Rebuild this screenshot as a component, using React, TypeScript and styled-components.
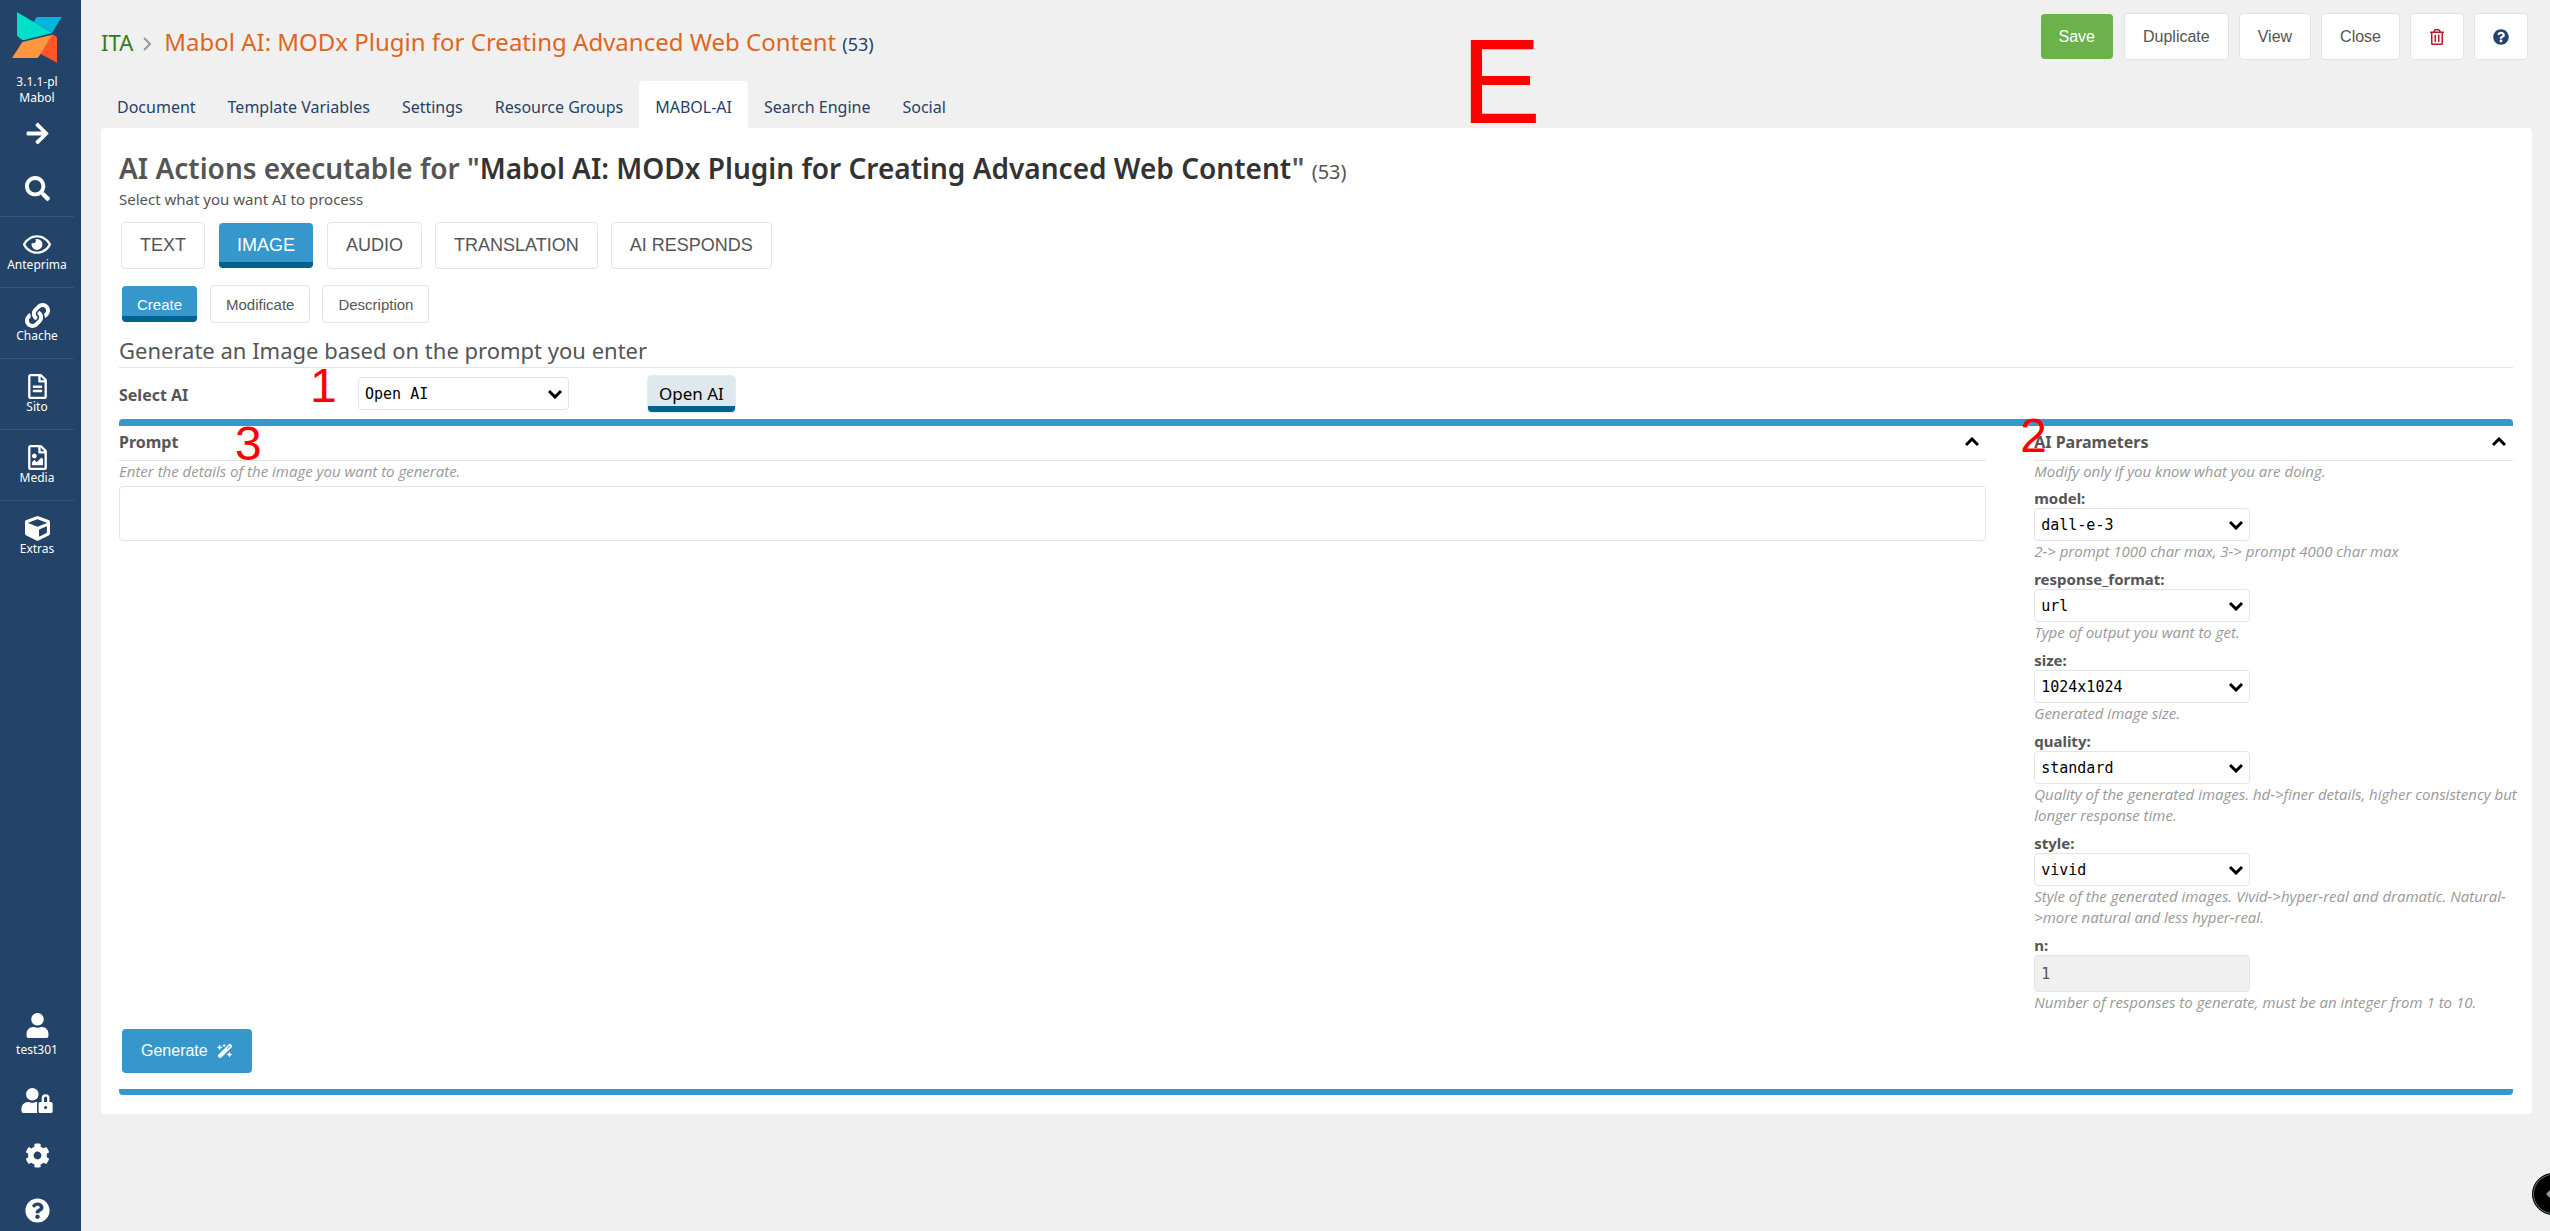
import React from "react";
import styled, { createGlobalStyle, css } from "styled-components";
import {
  FaArrowRight,
  FaSearch,
  FaRegEye,
  FaLink,
  FaRegFileAlt,
  FaRegFileImage,
  FaCube,
  FaUser,
  FaUserLock,
  FaCog,
  FaQuestionCircle,
  FaRegTrashAlt,
} from "react-icons/fa";
import { FaWandMagicSparkles } from "react-icons/fa6";

const navy = "#234368";
const blue = "#3697cd";
const deepBlue = "#00628f";
const line = "#e4e4e4";
const uiFont = '"Segoe UI", "Noto Sans", sans-serif';
const helpFont = '"Segoe UI", "Open Sans", sans-serif';
const buttonFont = '"Liberation Sans", Arial, sans-serif';
const monoFont = '"DejaVu Sans Mono", monospace';

const GlobalStyle = createGlobalStyle`
  *, *::before, *::after { box-sizing: border-box; }
  body {
    margin: 0;
    background: #f0f0f0;
    color: #555;
    font-family: ${uiFont};
    overflow: hidden;
  }
  h1, h2, h3, h4, p { margin: 0; }
`;

const Shell = styled.div`
  display: flex;
  height: 100vh;
  overflow: hidden;
`;

/* ---------- sidebar ---------- */

const Sidebar = styled.nav`
  display: flex;
  flex-direction: column;
  flex: 0 0 81px;
  padding-right: 7px;
  background: ${navy};
  overflow: hidden;
`;

const Brand = styled.a`
  display: flex;
  flex-direction: column;
  align-items: center;
  height: 106px;
  padding-top: 12px;
  color: #fff;
  font-size: 12px;
  line-height: 16px;
  text-align: center;
  text-decoration: none;

  svg {
    margin-bottom: 11px;
  }
`;

const NavItem = styled.a<{ $ruled?: boolean; $labelled?: boolean; $iconWidth?: number }>`
  display: flex;
  flex-direction: column;
  align-items: center;
  flex-shrink: 0;
  height: ${(p) => (p.$labelled ? 71 : 55)}px;
  padding-top: 15px;
  border-top: ${(p) => (p.$ruled ? "1px solid #38567a" : "none")};
  color: #fff;
  font-size: 12px;
  line-height: 16px;
  text-decoration: none;

  svg {
    flex-shrink: 0;
    width: ${(p) => p.$iconWidth ?? 25}px;
    height: 25px;
  }
`;

const FootNav = styled.div`
  display: flex;
  flex-direction: column;
  margin-top: auto;
  margin-bottom: -7px;

  ${NavItem}:first-child {
    gap: 4px;
    height: 75px;
  }
`;

/* ---------- header ---------- */

const Main = styled.main`
  flex: 1;
  min-width: 0;
  padding: 13px 18px 0 20px;
`;

const Header = styled.header`
  display: flex;
  justify-content: space-between;
  align-items: flex-start;
  height: 68px;
  padding-right: 4px;
`;

const Crumbs = styled.div`
  display: flex;
  align-items: baseline;
  padding-top: 12px;
  font-size: 24px;
  line-height: 34px;
  color: ${navy};
`;

const CrumbLink = styled.a`
  color: #2b8013;
  font-size: 22px;
  text-decoration: none;
`;

const CrumbSep = styled.svg`
  margin: 0 13px 0 10px;
`;

const PageTitle = styled.h1`
  color: #e0661c;
  font-size: 24px;
  font-weight: 400;
  line-height: 34px;
`;

const PageId = styled.span`
  margin-left: 6px;
  font-size: 18px;
`;

const Toolbar = styled.div`
  display: flex;
  gap: 10px;
`;

const buttonBase = css`
  display: inline-flex;
  align-items: center;
  justify-content: center;
  border: 1px solid ${line};
  border-radius: 4px;
  background: #fff;
  color: #555;
  font-family: ${buttonFont};
  cursor: pointer;
`;

const ToolButton = styled.button<{ $tone?: "primary" | "danger" | "info" }>`
  ${buttonBase}
  height: 47px;
  padding: 0 18px;
  font-size: 16px;
  ${(p) => p.$tone === "primary" && "background: #6cb24a; border-color: #f0f0f0; color: #fff; background-clip: padding-box;"}
  ${(p) => p.$tone === "danger" && "color: #be1622;"}
  ${(p) => p.$tone === "info" && `color: ${navy};`}
`;

const TabBar = styled.div`
  display: flex;
`;

const Tab = styled.button<{ $active?: boolean }>`
  height: 47px;
  padding: 4px 16px 0;
  border: 0;
  border-radius: 4px 4px 0 0;
  background: ${(p) => (p.$active ? "#fff" : "transparent")};
  color: ${navy};
  font-family: ${uiFont};
  font-size: 16px;
  cursor: pointer;
`;

/* ---------- panel ---------- */

const Panel = styled.section`
  padding: 20px 19px 19px 18px;
  border-radius: 4px;
  background: #fff;
`;

const PanelTitle = styled.h2`
  color: #555;
  font-size: 28px;
  font-weight: 600;
  line-height: 40px;

  strong {
    color: #333;
    font-weight: 600;
  }
  small {
    font-size: 20px;
    font-weight: 400;
    line-height: 1;
  }
`;

const Lead = styled.p`
  font-size: 15px;
  line-height: 22px;
`;

const ButtonRow = styled.div<{ $gap: number }>`
  display: flex;
  gap: ${(p) => p.$gap}px;
  margin: 12px 2px;

  & + & {
    margin-top: 16px;
  }
`;

const ChoiceButton = styled.button<{ $small?: boolean; $active?: boolean }>`
  ${buttonBase}
  height: ${(p) => (p.$small ? 38 : 47)}px;
  padding: 0 ${(p) => (p.$small ? 15 : 18)}px;
  font-size: ${(p) => (p.$small ? 15 : 18)}px;
  ${(p) =>
    p.$active &&
    css`
      border-color: #fff;
      background: linear-gradient(to top, ${deepBlue} 6px, ${blue} 6px);
      background-clip: padding-box;
      color: #fff;
    `}
`;

const TaskTitle = styled.h3`
  padding-bottom: 2px;
  border-bottom: 1px solid ${line};
  font-size: 22px;
  font-weight: 400;
  line-height: 30px;
`;

const EngineRow = styled.div`
  position: relative;
  display: flex;
  align-items: center;
  height: 51px;
`;

const EngineLabel = styled.label`
  width: 239px;
  padding-top: 2px;
  font-size: 16px;
  font-weight: 700;
`;

const Chip = styled.span`
  display: block;
  margin-left: 78px;
  padding: 0 11px;
  border: 1px solid #e4ecf0;
  border-radius: 4px;
  background: linear-gradient(to top, ${deepBlue} 6px, #dfe8ed 6px);
  background-clip: padding-box;
  color: #000;
  font-size: 17px;
  line-height: 36px;
`;

const SelectWrap = styled.span<{ $width: number }>`
  position: relative;
  display: block;
  width: ${(p) => p.$width}px;

  svg {
    position: absolute;
    top: 12px;
    right: 7px;
    pointer-events: none;
  }
`;

const SelectBox = styled.select`
  display: block;
  width: 100%;
  height: 33px;
  padding: 0 6px;
  border: 1px solid ${line};
  border-radius: 4px;
  background: #fff;
  color: #000;
  font-family: ${monoFont};
  font-size: 15px;
  appearance: none;
`;

const WorkBox = styled.div`
  border-top: 7px solid ${blue};
  border-bottom: 6px solid ${blue};
  border-radius: 4px;
  padding-bottom: 16px;
`;

const Columns = styled.div`
  display: grid;
  grid-template-columns: 78% 20%;
  justify-content: space-between;
`;

const Column = styled.section`
  position: relative;
  display: flex;
  flex-direction: column;
  min-width: 0;
`;

const ColumnHead = styled.div`
  display: flex;
  align-items: center;
  justify-content: space-between;
  height: 35px;
  padding: 0 7px 3px 0;
  border-bottom: 1px solid ${line};
`;

const ColumnTitle = styled.h4`
  font-size: 16px;
  font-weight: 700;
  line-height: 24px;
`;

const FoldButton = styled.button`
  display: flex;
  padding: 0;
  border: 0;
  background: none;
  cursor: pointer;
`;

const Help = styled.p`
  margin-right: -12px;
  color: #999;
  font-family: ${helpFont};
  font-size: 15px;
  font-style: italic;
  line-height: 21px;
`;

const PromptBox = styled.textarea`
  display: block;
  width: 100%;
  height: 55px;
  margin-top: 4px;
  border: 1px solid ${line};
  border-radius: 4px;
  resize: none;
`;

const Field = styled.div`
  margin-top: 6px;
`;

const FieldLabel = styled.label`
  display: block;
  font-size: 15px;
  font-weight: 700;
  line-height: 20px;
`;

const NumberBox = styled.input`
  display: block;
  width: 216px;
  height: 37px;
  padding: 0 6px;
  border: 1px solid ${line};
  border-radius: 4px;
  background: #f0f0f0;
  color: #555;
  font-family: ${monoFont};
  font-size: 15px;
`;

const FieldList = styled.div`
  display: flex;
  flex-direction: column;
  gap: 1px;
`;

const GenerateButton = styled.button`
  ${buttonBase}
  gap: 9px;
  height: 44px;
  margin: 16px 3px 0;
  padding: 0 19px;
  border: 0;
  background: ${blue};
  color: #fff;
  font-size: 16px;
`;

/* ---------- overlays ---------- */

const Marker = styled.span<{ $x: number; $y: number; $size?: number }>`
  position: absolute;
  left: ${(p) => p.$x}px;
  top: ${(p) => p.$y}px;
  color: #f00;
  font-family: ${buttonFont};
  font-size: ${(p) => p.$size ?? 48}px;
  line-height: 1;
  pointer-events: none;
`;

const Floater = styled.button`
  position: fixed;
  right: -24px;
  bottom: 16px;
  display: flex;
  align-items: center;
  width: 42px;
  height: 42px;
  padding: 0 0 0 12px;
  border: 1px solid #000;
  border-radius: 50%;
  background: #000;
  box-shadow: inset 0 0 0 1px #5c7478;
  color: #999;
`;

const Chevron = ({ up }: { up?: boolean }) => (
  <svg width="14" height="10" viewBox="0 0 14 10" fill="none" stroke="#000" strokeWidth="3">
    <path d={up ? "M1 8 L7 2 L13 8" : "M1 2 L7 8 L13 2"} />
  </svg>
);

const Logo = () => (
  <svg width="50" height="51" viewBox="0 0 150 153">
    <path d="M74 15h75l-28 47-56-32z" fill="#00b5de" />
    <path d="M15 0l106 63-84 21q-4 1-7-1l-12-9q-3-2-3-6z" fill="#00decc" />
    <path d="M121 67l11 6q3 2 3 6v73l-53-28z" fill="#ff5529" />
    <path d="M31 90l90-22-41 66q-2 4-6 4H0z" fill="#ff9640" />
  </svg>
);

const topLinks = [
  { icon: FaRegEye, label: "Anteprima", width: 28 },
  { icon: FaLink, label: "Chache", width: 25 },
  { icon: FaRegFileAlt, label: "Sito", width: 25 },
  { icon: FaRegFileImage, label: "Media", width: 25 },
  { icon: FaCube, label: "Extras", width: 25 },
];

const tabs = [
  "Document",
  "Template Variables",
  "Settings",
  "Resource Groups",
  "MABOL-AI",
  "Search Engine",
  "Social",
];

const modes = ["TEXT", "IMAGE", "AUDIO", "TRANSLATION", "AI RESPONDS"];
const actions = ["Create", "Modificate", "Description"];

const parameters = [
  { name: "model", options: ["dall-e-3", "dall-e-2"], help: "2-> prompt 1000 char max, 3-> prompt 4000 char max" },
  { name: "response_format", options: ["url", "b64_json"], help: "Type of output you want to get." },
  { name: "size", options: ["1024x1024", "1792x1024", "1024x1792"], help: "Generated image size." },
  {
    name: "quality",
    options: ["standard", "hd"],
    help: "Quality of the generated images. hd->finer details, higher consistency but longer response time.",
  },
  {
    name: "style",
    options: ["vivid", "natural"],
    help: "Style of the generated images. Vivid->hyper-real and dramatic. Natural->more natural and less hyper-real.",
  },
];

type DropDownProps = { id: string; options: string[]; width: number };

const DropDown = ({ id, options, width }: DropDownProps) => (
  <SelectWrap $width={width}>
    <SelectBox id={id} defaultValue={options[0]}>
      {options.map((o) => (
        <option key={o}>{o}</option>
      ))}
    </SelectBox>
    <Chevron />
  </SelectWrap>
);

export default function App() {
  return (
    <>
      <GlobalStyle />
      <Shell>
        <Sidebar>
          <Brand href="#home">
            <Logo />
            <span>3.1.1-pl</span>
            <span>Mabol</span>
          </Brand>
          <NavItem href="#expand" aria-label="Expand">
            <FaArrowRight />
          </NavItem>
          <NavItem href="#search" aria-label="Search">
            <FaSearch />
          </NavItem>
          {topLinks.map(({ icon: Icon, label, width }) => (
            <NavItem key={label} href={`#${label}`} $ruled $labelled $iconWidth={width}>
              <Icon />
              {label}
            </NavItem>
          ))}
          <FootNav>
            <NavItem href="#user" $labelled>
              <FaUser />
              test301
            </NavItem>
            <NavItem href="#access" aria-label="Access" $iconWidth={32}>
              <FaUserLock />
            </NavItem>
            <NavItem href="#settings" aria-label="System settings">
              <FaCog />
            </NavItem>
            <NavItem href="#help" aria-label="Help">
              <FaQuestionCircle />
            </NavItem>
          </FootNav>
        </Sidebar>

        <Main>
          <Header>
            <Crumbs>
              <CrumbLink href="#ita">ITA</CrumbLink>
              <CrumbSep width="8" height="14" viewBox="0 0 8 14" fill="none" stroke="#999" strokeWidth="2">
                <path d="M1 1l6 6-6 6" />
              </CrumbSep>
              <PageTitle>Mabol AI: MODx Plugin for Creating Advanced Web Content</PageTitle>
              <PageId>(53)</PageId>
            </Crumbs>
            <Toolbar>
              <ToolButton $tone="primary">Save</ToolButton>
              <ToolButton>Duplicate</ToolButton>
              <ToolButton>View</ToolButton>
              <ToolButton>Close</ToolButton>
              <ToolButton $tone="danger" aria-label="Delete">
                <FaRegTrashAlt size={16} />
              </ToolButton>
              <ToolButton $tone="info" aria-label="Help">
                <FaQuestionCircle size={16} />
              </ToolButton>
            </Toolbar>
          </Header>

          <TabBar role="tablist">
            {tabs.map((t) => (
              <Tab key={t} role="tab" aria-selected={t === "MABOL-AI"} $active={t === "MABOL-AI"}>
                {t}
              </Tab>
            ))}
          </TabBar>

          <Panel>
            <PanelTitle>
              AI Actions executable for "<strong>Mabol AI: MODx Plugin for Creating Advanced Web Content</strong>"{" "}
              <small>(53)</small>
            </PanelTitle>
            <Lead>Select what you want AI to process</Lead>

            <ButtonRow $gap={13}>
              {modes.map((m) => (
                <ChoiceButton key={m} $active={m === "IMAGE"}>
                  {m}
                </ChoiceButton>
              ))}
            </ButtonRow>
            <ButtonRow $gap={12}>
              {actions.map((a) => (
                <ChoiceButton key={a} $small $active={a === "Create"}>
                  {a}
                </ChoiceButton>
              ))}
            </ButtonRow>

            <TaskTitle>Generate an Image based on the prompt you enter</TaskTitle>
            <EngineRow>
              <EngineLabel htmlFor="engine">Select AI</EngineLabel>
              <DropDown id="engine" options={["Open AI"]} width={211} />
              <Chip>Open AI</Chip>
              <Marker $x={191} $y={-6}>1</Marker>
            </EngineRow>

            <WorkBox>
              <Columns>
                <Column>
                  <ColumnHead>
                    <ColumnTitle id="prompt-title">Prompt</ColumnTitle>
                    <FoldButton aria-label="Collapse prompt">
                      <Chevron up />
                    </FoldButton>
                  </ColumnHead>
                  <Help>Enter the details of the image you want to generate.</Help>
                  <PromptBox aria-labelledby="prompt-title" />
                  <Marker $x={116} $y={-6}>3</Marker>
                </Column>
                <Column>
                  <ColumnHead>
                    <ColumnTitle>AI Parameters</ColumnTitle>
                    <FoldButton aria-label="Collapse parameters">
                      <Chevron up />
                    </FoldButton>
                  </ColumnHead>
                  <Help>Modify only if you know what you are doing.</Help>
                  <FieldList>
                    {parameters.map((p) => (
                      <Field key={p.name}>
                        <FieldLabel htmlFor={p.name}>{p.name}:</FieldLabel>
                        <DropDown id={p.name} options={p.options} width={216} />
                        <Help>{p.help}</Help>
                      </Field>
                    ))}
                    <Field>
                      <FieldLabel htmlFor="n">n:</FieldLabel>
                      <NumberBox id="n" defaultValue="1" disabled />
                      <Help>Number of responses to generate, must be an integer from 1 to 10.</Help>
                    </Field>
                  </FieldList>
                  <Marker $x={-14} $y={-14}>2</Marker>
                </Column>
              </Columns>
              <GenerateButton>
                Generate <FaWandMagicSparkles size={16} />
              </GenerateButton>
            </WorkBox>
          </Panel>
        </Main>
      </Shell>
      <Marker $x={1461} $y={21} $size={120}>E</Marker>
      <Floater aria-label="Open side bar">
        <svg width="10" height="10" viewBox="0 0 10 10" fill="currentColor">
          <path d="M6 0L1 5l5 5z" />
        </svg>
      </Floater>
    </>
  );
}
